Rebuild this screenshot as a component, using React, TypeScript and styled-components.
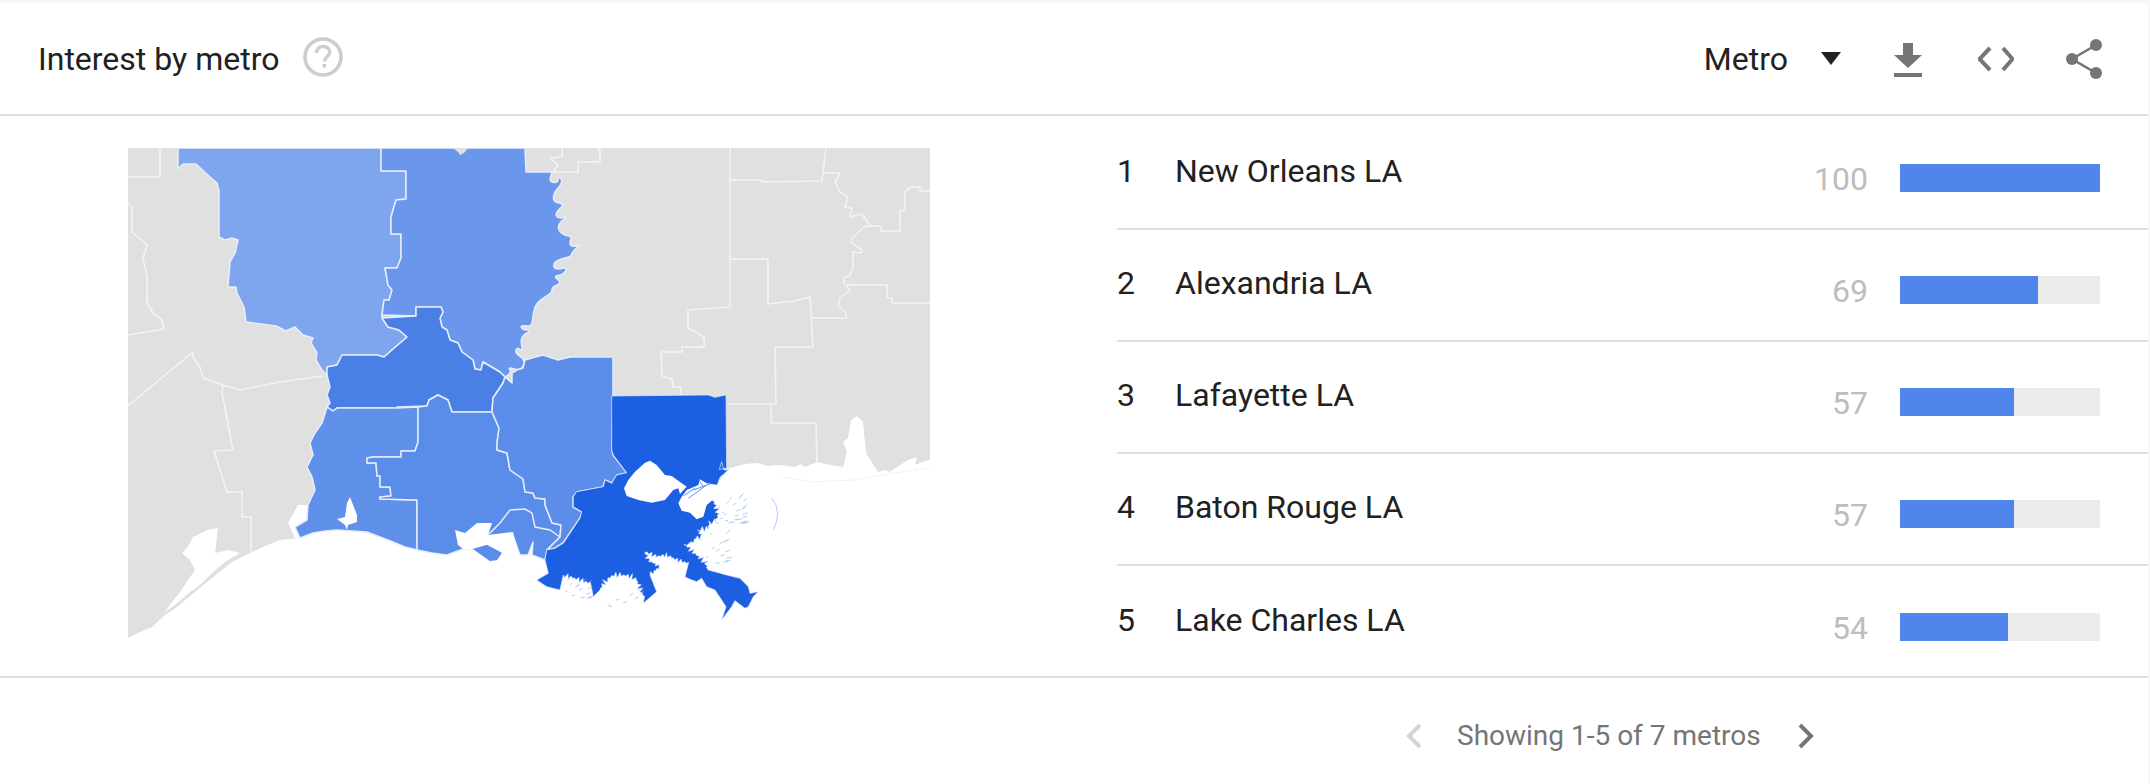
import React from "react";
import styled, { createGlobalStyle } from "styled-components";

const Global = createGlobalStyle`
  html, body { margin: 0; padding: 0; background: #f8f8f8; }
  body { font-family: Roboto, "Liberation Sans", sans-serif; color: #212121; }
`;

const Page = styled.div`width: 2150px; height: 784px; overflow: hidden; background: #f8f8f8; padding: 3px 2px 0 0; box-sizing: border-box;`;
const Card = styled.section`height: 781px; background: #fff; border-top-right-radius: 5px;`;
const Header = styled.header`
  height: 113px; box-sizing: border-box; border-bottom: 2px solid #e0e0e0;
  display: flex; align-items: center; padding: 0 46px 0 38px;
`;
const Title = styled.h2`margin: 0; font-weight: 400; font-size: 32px; line-height: 36px; color: #212121;`;
const Help = styled.svg`width: 40px; height: 40px; margin-left: 24px; flex: none; margin-bottom: 4px;`;
const Spacer = styled.div`flex: 1;`;
const Selector = styled.div`display: flex; align-items: center; font-size: 32px; line-height: 36px; color: #212121;`;
const Caret = styled.div`
  width: 0; height: 0; margin-left: 33px;
  border-left: 10.5px solid transparent; border-right: 10.5px solid transparent; border-top: 13px solid #212121;
`;
const Actions = styled.div`display: flex; align-items: center; margin-left: 53px;`;
const ActionIcon = styled.svg<{ $w: number; $gap?: number }>`
  width: ${(p) => p.$w}px; height: 40px; margin-left: ${(p) => p.$gap ?? 0}px; display: block; flex: none;
`;
const Content = styled.main`display: flex; height: 562px; box-sizing: border-box; border-bottom: 2px solid #e0e0e0;`;
const MapPane = styled.div`width: 1117px; flex: none; padding: 32px 0 0 128px; box-sizing: border-box;`;
const MapSvg = styled.svg`width: 802px; height: 492px; display: block;`;
const List = styled.ol`flex: 1; list-style: none; margin: 0; padding: 2px 0 0;`;
const Row = styled.li<{ $last?: boolean }>`
  height: 112px; box-sizing: border-box; display: flex; align-items: center; padding-right: 48px;
  border-bottom: ${(p) => (p.$last ? "none" : "2px solid #e0e0e0")};
`;
const Rank = styled.span`width: 58px; font-size: 32px; line-height: 36px; padding-bottom: 5px; color: #212121;`;
const Name = styled.span`flex: 1; font-size: 32px; line-height: 36px; padding-bottom: 5px; color: #212121;`;
const Value = styled.span`font-size: 32px; line-height: 36px; color: #bdbdbd; padding-top: 12px; text-align: right;`;
const Track = styled.div`width: 200px; height: 28px; margin: 10px 0 0 32px; background: #ececec;`;
const Fill = styled.div`height: 100%; background: #5085ec;`;
const Footer = styled.footer`
  height: 106px; display: flex; align-items: center; padding: 9px 0 0 1406px; box-sizing: border-box;
`;
const Chevron = styled.svg`width: 16px; height: 26px; flex: none;`;
const Showing = styled.span`font-size: 28px; line-height: 32px; color: #757575; margin: 0 37px 0 35px;`;

const rows = [
  ["New Orleans LA", 100],
  ["Alexandria LA", 69],
  ["Lafayette LA", 57],
  ["Baton Rouge LA", 57],
  ["Lake Charles LA", 54],
] as const;

const LINE = "#f3f3f3";
const EDGE = "#e6edfb";

type Pt = [number, number];
const parse = (s: string): Pt[] => s.trim().split(/\s+/).map((p) => p.split(",").map(Number) as Pt);

/* turns a stretch of coastline into marsh: subdivides each segment and roughens it irregularly */
const jag = (s: string, step: number, amp: number): string => {
  const pts = parse(s);
  const out: string[] = [];
  let n = 0;
  for (let i = 0; i < pts.length - 1; i++) {
    const [x0, y0] = pts[i];
    const [x1, y1] = pts[i + 1];
    const len = Math.hypot(x1 - x0, y1 - y0) || 1;
    const count = Math.max(1, Math.round(len / step));
    const nx = -(y1 - y0) / len;
    const ny = (x1 - x0) / len;
    for (let k = 0; k < count; k++) {
      const t = k / count + (Math.sin(n * 3.1) * 0.3) / count;
      const r = Math.abs(Math.sin(n * 2.7 + 0.6));
      const a = (n % 2 === 0 ? 1 : -1) * amp * (0.15 + 0.85 * r * r);
      n++;
      out.push(`${(x0 + (x1 - x0) * t + nx * a).toFixed(1)},${(y0 + (y1 - y0) * t + ny * a).toFixed(1)}`);
    }
  }
  out.push(`${pts[pts.length - 1][0]},${pts[pts.length - 1][1]}`);
  return out.join(" ");
};

/* rounds a winding boundary (the river) by running a curve through segment midpoints */
const smooth = (s: string): string => {
  const pts = parse(s);
  let d = `L${pts[0][0]} ${pts[0][1]}`;
  for (let i = 1; i < pts.length - 1; i++) {
    const mx = (pts[i][0] + pts[i + 1][0]) / 2;
    const my = (pts[i][1] + pts[i + 1][1]) / 2;
    d += ` Q${pts[i][0]} ${pts[i][1]} ${mx} ${my}`;
  }
  const last = pts[pts.length - 1];
  return `${d} L${last[0]} ${last[1]}`;
};

const speckle = (x0: number, y0: number, x1: number, y1: number, n: number, seed: number): string[] => {
  const out: string[] = [];
  for (let i = 0; i < n; i++) {
    const a = Math.abs(Math.sin((i + seed) * 12.9898)) % 1;
    const b = Math.abs(Math.sin((i + seed) * 78.233)) % 1;
    const x = x0 + (x1 - x0) * a;
    const y = y0 + (y1 - y0) * b;
    const ang = -0.9 + b * 0.8;
    const len = 6 + a * 10;
    out.push(`${x.toFixed(1)},${y.toFixed(1)} ${(x + Math.cos(ang) * len).toFixed(1)},${(y + Math.sin(ang) * len).toFixed(1)}`);
  }
  return out;
};

const sea =
  "128,638 140,632 152,627 165,615 177,607 195,592 213,577 232,562 250,553 265,546 280,540 300,538 313,533 325,531 337,530 352,531 367,532 380,537 393,542 405,547 417,550 432,553 447,555 463,549 473,549 490,561 497,560 500,553 510,545 512,533 520,555 528,555 533,542 532,555 545,560 620,500 720,480 730,468 745,464 757,463 768,466 780,465 795,467 800,464 805,467 817,462 830,465 843,467 847,452 843,442 848,438 851,420 857,416 863,422 866,453 878,472 885,470 890,472 900,465 908,460 917,457 915,465 925,461 930,460 930,640 128,640";

const regionA =
  "178,148 178,169 183,164 196,164 210,177 217,183 219,191 219,237 225,240 232,238 238,240 235,253 230,262 228,287 236,287 237,293 244,307 246,322 276,326 286,331 295,327 303,335 313,338 311,343 317,353 316,360 322,370 327,375 327,367 337,365 342,355 377,355 384,357 392,350 407,337 399,330 388,327 382,318 382,315 384,300 389,300 392,290 388,285 385,268 397,268 401,258 401,234 391,234 391,217 396,200 406,199 406,171 381,171 381,148";
const regionBHead =
  "M381 148 L381 171 L406 171 L406 199 L396 200 L391 217 L391 234 L401 234 L401 258 L397 268 L385 268 L388 285 L392 290 L389 300 L384 300 L382 315 L416 316 L416 307 L441 307 L443 312 L440 318 L442 327 L447 330 L450 340 L458 343 L462 352 L473 360 L475 369 L481 370 L483 362 L500 372 L505 377";
const regionBRiver = smooth(
  "505,377 512,373 508,367 517,370 523,368 525,360 515,353 517,347 523,352 520,337 532,330 523,330 520,325 532,327 533,313 537,302 552,293 552,287 562,283 553,276 563,275 568,267 555,270 553,263 563,258 571,257 572,252 582,243 575,247 569,245 572,236 565,236 558,230 559,223 568,216 558,219 555,213 565,204 553,202 554,192 563,183 559,175 558,183 549,182 552,172"
);
const regionC =
  "382,318 416,316 416,307 441,307 443,312 440,318 442,327 447,330 450,340 458,343 462,352 473,360 475,369 481,370 483,362 500,372 505,377 503,383 497,392 493,398 492,412 452,412 448,400 438,395 429,400 427,406 397,407 397,408 337,408 333,411 327,407 330,403 327,395 330,387 327,375 327,367 337,365 342,355 377,355 384,357 392,350 407,337 399,330 388,327";
const regionE =
  "327,407 333,411 337,408 397,408 418,407 418,442 415,451 401,451 401,457 373,457 367,458 367,463 376,463 377,476 380,476 380,487 390,487 391,496 380,497 380,499 417,500 417,550 405,547 393,542 380,537 367,532 352,531 337,530 325,531 313,533 300,538 295,527 307,520 308,505 315,490 312,477 307,467 313,455 310,443 315,433 322,423";
const regionF =
  "418,407 427,406 429,400 438,395 448,400 452,412 492,412 499,428 497,443 497,450 507,453 510,470 523,479 525,492 533,493 535,498 545,499 545,505 552,523 561,525 560,537 547,550 545,560 532,555 533,542 528,555 520,555 512,533 510,545 500,553 497,560 490,561 473,549 463,549 447,555 432,553 417,550 417,500 380,499 380,497 391,496 390,487 380,487 380,476 377,476 376,463 367,463 367,458 373,457 401,457 401,451 415,451 418,442";
const regionG =
  "525,360 543,355 558,360 570,357 613,357 613,396 612,450 613,455 627,473 617,475 612,483 605,480 603,487 577,492 573,497 573,507 582,512 580,518 563,543 555,548 547,550 560,537 561,525 552,523 545,505 545,499 535,498 533,493 525,492 523,479 510,470 507,453 497,450 497,443 499,428 492,412 493,398 497,392 503,383 505,377 512,383 512,373 517,370 523,368";

const grayLines = [
  "128,177 160,177 160,148",
  "128,203 132,207 132,232 147,245 143,258 147,277 147,302 153,313 162,320 164,329 128,335",
  "128,406 147,390 193,352 193,357 200,367 203,378 223,385 240,390 280,382 323,376",
  "223,385 222,393 233,450 214,451 227,492 242,492 242,517 251,517 251,552",
  "553,172 578,172 578,162 600,162 600,150 597,148",
  "562,148 562,157 550,158 558,165 553,172",
  "730,148 730,307 688,310 688,328 704,337 704,347 682,347 682,352 661,352 662,376 672,379 673,387 681,387 681,396",
  "730,180 760,180 763,182 822,181 826,148",
  "823,173 840,173 835,182 840,192 848,197 845,207 852,208 850,217 862,214 870,226 864,227 852,238 852,243 862,250 862,253 853,252 853,267 850,275 844,278 844,283 850,290 840,298 838,305 845,312 847,318 812,318",
  "730,259 768,259 768,304 795,301 810,297 813,347 775,347 776,404 728,404",
  "870,226 881,226 881,231 900,231 900,211 905,210 905,192 910,187 920,187 920,191 930,191",
  "847,285 887,285 887,298 892,298 892,303 930,303",
  "771,404 771,423 816,423 817,462",
];

/* delta detail drawn in a 3x local space */
const nola = [
  "335,18 625,15 645,22 678,15 680,235 658,238 665,215 672,240 685,240 660,262 650,290 640,330",
  jag("640,330 655,370 650,395 630,395 625,415 595,420 605,440 585,445 575,465 555,462 590,495 615,515 625,540", 6, 9),
  "680,555 720,565 745,590 750,610 775,605 760,620 745,650 735,655 705,632 695,650 665,690 678,650 645,600 620,590 605,565 590,575 570,568 555,560",
  jag("565,520 530,510 500,495 470,500 435,485 445,510 480,530 450,555", 6, 7),
  "470,605 430,640",
  jag("430,620 410,570 395,560 365,555 340,555 315,575 300,600", 6, 9),
  "280,620",
  jag("270,580 240,570 190,555", 6, 8),
  "180,600 140,590 110,570 145,550 135,510 140,480 165,475 190,460 240,385 245,365 220,350 220,320 230,305 310,290 315,270 335,280 350,255 380,248 340,195 335,180",
].join(" ");
const pontchartrain =
  "372,295 380,318 415,330 455,338 495,330 520,300 535,295 540,312 560,290 515,258 495,255 470,225 450,212 435,218 405,245 385,270";
const borgne =
  "535,340 545,362 570,368 590,388 610,380 620,345 650,320 655,285 620,280 600,268 595,285 560,300 545,320";
const channels = ["550,318 585,295", "565,325 620,285", "580,300 630,282", "600,275 610,290"];
const specks = [
  ...speckle(645, 315, 730, 400, 26, 1),
  ...speckle(600, 430, 680, 520, 16, 40),
  ...speckle(190, 570, 265, 625, 14, 70),
  ...speckle(300, 600, 420, 650, 8, 90),
];
const chandeleur = "815,325 828,345 833,372 828,400 820,420";

export default function App() {
  return (
    <Page>
      <Global />
      <Card>
        <Header>
          <Title>Interest by metro</Title>
          <Help viewBox="0 0 40 40">
            <circle cx="20" cy="20" r="18" fill="none" stroke="#cdcdcd" strokeWidth="3.6" />
            <path d="M13.5 16c0-4 3-6.500 6.700-6.500 3.800 0 6.500 2.400 6.500 5.600 0 4.500-5.200 4.600-5.200 9.400" fill="none" stroke="#cdcdcd" strokeWidth="3.4" />
            <rect x="19.600" y="27" width="3.400" height="3.600" fill="#cdcdcd" />
          </Help>
          <Spacer />
          <Selector>
            Metro
            <Caret />
          </Selector>
          <Actions>
            <ActionIcon $w={28} viewBox="1894 39 28 40">
              <path d="M1903 43h10v12h9l-14 13-14-13h9z M1894 73h28v4h-28z" fill="#757575" />
            </ActionIcon>
            <ActionIcon $w={36} $gap={56} viewBox="1978 39 36 40">
              <path d="M1990 48 1979.500 59 1990 70 M2003 48 2012.500 59 2003 70" fill="none" stroke="#757575" strokeWidth="4" />
            </ActionIcon>
            <ActionIcon $w={36} $gap={52} viewBox="2066 39 36 40">
              <path d="M2096 45 2072 59 2096 73" fill="none" stroke="#757575" strokeWidth="2.600" />
              <circle cx="2096" cy="45" r="6" fill="#757575" />
              <circle cx="2072" cy="59" r="6" fill="#757575" />
              <circle cx="2096" cy="73" r="6" fill="#757575" />
            </ActionIcon>
          </Actions>
        </Header>
        <Content>
          <MapPane>
            <MapSvg viewBox="128 148 802 492">
              <rect x="128" y="148" width="802" height="492" fill="#e0e0e0" />
              <polygon points={sea} fill="#fff" />
              <polyline points="783,477 813,482 853,480 900,472 930,468" fill="none" stroke="#f1f1f1" strokeWidth="1.200" />
              <g fill="#fff">
                <polygon points="207,530 218,528 216,545 215,553 228,550 240,553 225,562 213,572 200,585 190,592 175,605 165,612 172,602 180,592 188,580 195,570 190,560 182,553 188,547 193,537" />
                <polygon points="298,505 308,505 307,520 295,527 300,538 295,538 288,523" />
              </g>
              <g stroke={LINE} strokeWidth="1.6" fill="none" strokeLinejoin="round">
                {grayLines.map((p) => (
                  <polyline key={p} points={p} />
                ))}
              </g>
              <g stroke={EDGE} strokeWidth="1.500" strokeLinejoin="round">
                <polygon points={regionA} fill="#7fa5ee" />
                <path d={`${regionBHead} ${regionBRiver} L526 172 L525 148 Z`} fill="#6a97ec" />
                <polygon points={regionC} fill="#4a7fe5" />
                <polygon points={regionE} fill="#5f90ea" />
                <polygon points={regionF} fill="#5a8ce9" />
                <polygon points={regionG} fill="#5d8dea" />
              </g>
              <polygon points="453,148 468,148 464,153 460,155 458,152" fill="#e0e0e0" />
              <g fill="#fff">
                <polygon points="350,497 357,515 357,522 348,525 347,530 345,525 337,519 345,517 347,503" />
                <polygon points="455,530 465,533 477,523 492,523 488,535 513,532 518,552 502,553 487,545 473,549 463,549 458,545" />
              </g>
              <polygon points="473,549 487,545 502,553 497,560 490,561" fill="#5a8ce9" />
              <polyline points="488,535 500,523 510,510 525,509 532,513 535,527 550,530 560,537" fill="none" stroke={EDGE} strokeWidth="1.500" />
              <g transform="translate(500 390) scale(.33333)">
                <polygon points={nola} fill="#1c5fe3" stroke="#e6edfb" strokeWidth="2" strokeLinejoin="round" />
                <polygon points={pontchartrain} fill="#fff" />
                <polygon points={borgne} fill="#fff" />
                <g stroke="#5f8fec" strokeWidth="3" fill="none">
                  {channels.map((s) => (
                    <polyline key={s} points={s} />
                  ))}
                </g>
                <g stroke="#8fb0f1" strokeWidth="2" fill="none">
                  {specks.map((s) => (
                    <polyline key={s} points={s} />
                  ))}
                  <polyline points={chandeleur} />
                </g>
              </g>
            </MapSvg>
          </MapPane>
          <List>
            {rows.map(([name, value], i) => (
              <Row key={name} $last={i === rows.length - 1}>
                <Rank>{i + 1}</Rank>
                <Name>{name}</Name>
                <Value>{value}</Value>
                <Track>
                  <Fill style={{ width: `${value}%` }} />
                </Track>
              </Row>
            ))}
          </List>
        </Content>
        <Footer>
          <Chevron viewBox="0 0 16 26">
            <path d="M14 2 3 13l11 11" fill="none" stroke="#d4d4d4" strokeWidth="4" />
          </Chevron>
          <Showing>Showing 1-5 of 7 metros</Showing>
          <Chevron viewBox="0 0 16 26">
            <path d="M2 2l11 11L2 24" fill="none" stroke="#757575" strokeWidth="4" />
          </Chevron>
        </Footer>
      </Card>
    </Page>
  );
}
